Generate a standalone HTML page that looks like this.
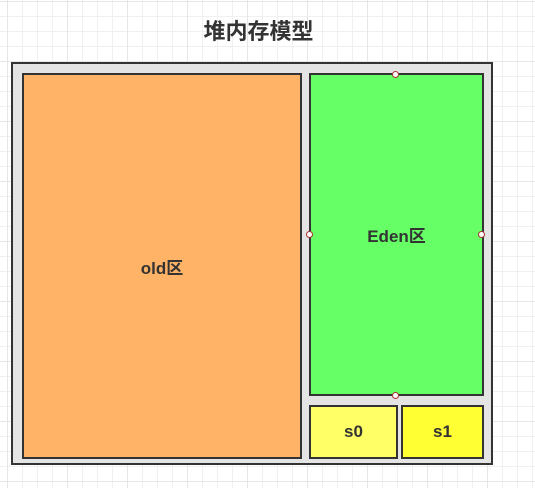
<html><head><style>
body{margin:0;width:535px;height:488px;position:relative;overflow:hidden;font-family:"Liberation Sans","Noto Sans CJK SC",sans-serif;
background-color:#fff;
background-image:linear-gradient(#e6e6e6 1px,transparent 1px),linear-gradient(90deg,#e6e6e6 1px,transparent 1px),linear-gradient(#f0f0f0 1px,transparent 1px),linear-gradient(90deg,#f0f0f0 1px,transparent 1px);
background-size:60px 60px,60px 60px,15px 15px,15px 15px;background-position:0 1px,7px 0,0 1px,7px 0}
.b{position:absolute;border:2px solid #333;box-sizing:border-box;display:flex;align-items:center;justify-content:center;font-weight:bold;font-size:17px;color:#333}
.h{position:absolute;width:7px;height:7px;border:1px solid #a33;border-radius:50%;background:#fff;box-sizing:border-box}
</style></head><body>
<div style="position:absolute;left:0;width:517px;top:14px;text-align:center;font-size:22px;font-weight:bold;color:#333">堆内存模型</div>
<div class="b" style="left:11px;top:62px;width:482px;height:403px;background:#e4e4e4"></div>
<div class="b" style="left:22px;top:73px;width:280px;height:386px;background:#ffb366">old区</div>
<div class="b" style="left:309px;top:73px;width:175px;height:323px;background:#66ff66">Eden区</div>
<div class="b" style="left:309px;top:405px;width:89px;height:54px;background:#ffff66">s0</div>
<div class="b" style="left:401px;top:405px;width:83px;height:54px;background:#ffff33">s1</div>
<div class="h" style="left:392px;top:71px"></div>
<div class="h" style="left:392px;top:392px"></div>
<div class="h" style="left:306px;top:231px"></div>
<div class="h" style="left:478px;top:231px"></div>
</body></html>
